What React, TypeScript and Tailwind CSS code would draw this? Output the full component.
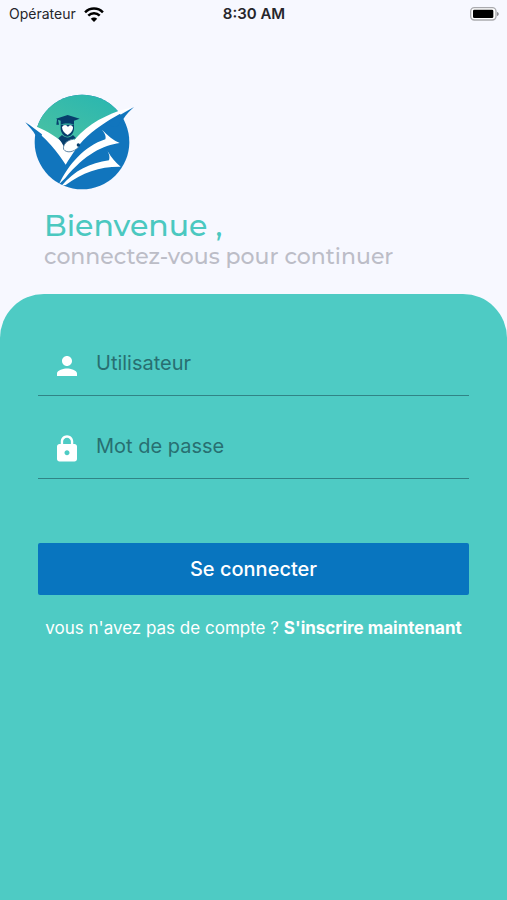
import { useState } from "react";
import type { FormEvent, ReactNode } from "react";
import { MdLock, MdPerson } from "react-icons/md";

function StatusBar() {
  return (
    <div className="grid h-7 grid-cols-3 items-center pr-2 pl-[9px] text-sm text-[#26262b]">
      <div className="flex items-center gap-2">
        <span>Opérateur</span>
        <svg viewBox="0 0 54 42" className="h-[15px] w-[20px]" fill="none" stroke="#000" strokeWidth="7">
          <path d="M2 15C16 1 38 1 52 15" />
          <path d="M11 24C20 15 34 15 43 24" />
          <path d="M27 42 18 33C23 28 31 28 36 33Z" fill="#000" stroke="none" />
        </svg>
      </div>
      <span className="text-center text-[15px] font-semibold">8:30 AM</span>
      <svg viewBox="0 0 90 42" className="h-[14px] w-[30px] justify-self-end">
        <rect x="5" y="2" width="76" height="37" rx="11" fill="#fff" stroke="#aaaaae" strokeWidth="4" />
        <rect x="12" y="8" width="61" height="25" rx="4" fill="#000" />
        <path d="M84 15C91 16 91 26 84 27Z" fill="#8e8e93" />
      </svg>
    </div>
  );
}

function Logo() {
  return (
    <svg viewBox="0 0 360 345" className="h-[115px] w-[120px]" role="img" aria-label="Logo">
      <defs>
        <linearGradient id="sky" x1="0" y1="1" x2="1" y2="0">
          <stop offset="0" stopColor="#4fc3a0" />
          <stop offset="1" stopColor="#20b3b4" />
        </linearGradient>
        <clipPath id="disc">
          <circle cx="186" cy="171" r="142" />
        </clipPath>
      </defs>
      <g clipPath="url(#disc)">
        <rect width="360" height="345" fill="#1175bd" />
        <path d="M0 0H360V50L295 78C245 98 195 128 155 175L130 178C105 156 80 140 40 126L0 110Z" fill="url(#sky)" />
      </g>
      {/* open book / check mark */}
      <path d="M18 114C58 126 92 143 120 166C130 173 140 178 151 180C188 128 240 98 297 77L341 66C286 92 250 115 214 143C178 172 158 206 137 239C115 204 82 160 18 114Z" fill="#fff" />
      <path d="M16 112C34 123 50 136 66 148L60 170 46 150C39 137 28 127 16 112Z" fill="#1175bd" />
      <path d="M342 66C332 75 319 87 310 102L290 125 255 120C282 101 312 82 342 66Z" fill="#1175bd" />
      {/* pages */}
      <path d="M117 298C146 238 192 184 256 163C259 154 255 146 246 134C264 153 280 165 299 174C250 181 196 206 136 279Z" fill="#fff" />
      <path d="M124 303C164 256 210 234 267 226C270 217 268 209 263 199C275 219 287 233 302 245C242 244 188 261 137 300Z" fill="#fff" />
      {/* graduate */}
      <path d="M122 119H162V132C160 146 152 155 142 155C131 154 123 144 122 132Z" fill="#073e6c" />
      <path d="M126 127C131 117 140 119 144 126C148 119 156 118 159 127C159 137 152 146 143 150C133 146 127 137 126 127Z" fill="#fff" />
      <path d="M108 101 143 90 179 101 162 107V119C153 114 131 114 122 119V107L114 104 117 119H109L111 103Z" fill="#073e6c" />
      <path d="M115 160 126 150C136 160 150 160 159 150L168 160C151 163 137 171 132 185C127 177 122 167 115 160Z" fill="#073e6c" />
      <path d="M160 163C141 164 127 181 131 193C138 204 160 204 177 185" fill="#fff" stroke="#416f93" strokeWidth="2.5" />
      <circle cx="175" cy="180" r="5" fill="#073e6c" />
    </svg>
  );
}

type FieldProps = {
  id: string;
  label: string;
  type: string;
  value: string;
  icon: ReactNode;
  onChange: (value: string) => void;
};

function Field({ id, label, type, value, icon, onChange }: FieldProps) {
  return (
    <div className="flex h-[61px] items-center gap-[14px] border-b border-[#318486] pl-[14px]">
      <label htmlFor={id} aria-label={label} className="pt-[2px] text-white">
        {icon}
      </label>
      <input
        id={id}
        type={type}
        value={value}
        placeholder={label}
        onChange={(e) => onChange(e.target.value)}
        className="h-9 min-w-0 flex-1 bg-transparent pb-1 text-[20px] leading-7 text-[#215f62] outline-none placeholder:text-[#286f71]"
      />
    </div>
  );
}

export default function App() {
  const [user, setUser] = useState("");
  const [password, setPassword] = useState("");

  function handleSubmit(e: FormEvent) {
    e.preventDefault();
  }

  return (
    <div className="flex min-h-screen flex-col bg-[#f7f8ff] font-[Inter,sans-serif]">
      <StatusBar />
      <header className="px-5 pt-[57px] pb-6">
        <Logo />
        <div className="px-6 pt-2 font-[Montserrat,Inter,sans-serif]">
          <h1 className="text-[30px] leading-9 font-medium text-[#4bc8c0]">Bienvenue ,</h1>
          <p className="text-[22px] leading-[26px] font-medium text-[#bcbdc7]">connectez-vous pour continuer</p>
        </div>
      </header>
      <main className="flex-1 rounded-t-[44px] bg-[#4ecbc4] px-[38px] pt-[41px]">
        <form onSubmit={handleSubmit}>
          <div className="flex flex-col gap-[22px]">
            <Field id="user" label="Utilisateur" type="text" value={user} onChange={setUser} icon={<MdPerson size={30} />} />
            <Field id="password" label="Mot de passe" type="password" value={password} onChange={setPassword} icon={<MdLock size={30} />} />
          </div>
          <button type="submit" className="mt-16 h-[52px] w-full rounded-xs bg-[#0875bf] text-[20px] font-medium text-white">
            Se connecter
          </button>
        </form>
        <p className="mt-5 text-center text-[17px] leading-[26px] text-white">
          vous n'avez pas de compte ?{" "}
          <a href="#inscription" className="font-bold">
            S'inscrire maintenant
          </a>
        </p>
      </main>
    </div>
  );
}
